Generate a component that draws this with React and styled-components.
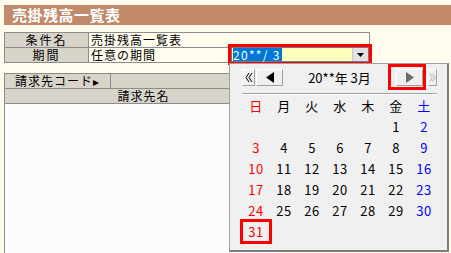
import React from "react";
import styled, { createGlobalStyle } from "styled-components";

const GlobalStyle = createGlobalStyle`
  body {
    margin: 0;
    background: #fffcee;
    font-family: "Noto Sans CJK JP", sans-serif;
  }
`;

const Page = styled.div`
  position: relative;
  width: 451px;
  height: 253px;
  overflow: hidden;
  box-sizing: border-box;
  padding: 5px 0 0 4px;
  background: #fffcee;
  font-size: 12px;
  color: #000;
`;

const TitleBar = styled.div`
  height: 20px;
  line-height: 20px;
  padding-left: 8px;
  background: #c08a6b;
  color: #fff;
  font-weight: bold;
  font-size: 15px;
  letter-spacing: 0.5px;
`;

const CondTable = styled.div`
  display: grid;
  grid-template-columns: 84px 1fr;
  width: 365px;
  margin-top: 7px;
  border-top: 1px solid #8c8c8c;
  border-left: 1px solid #8c8c8c;
`;

const Cell = styled.div`
  height: 14px;
  line-height: 14px;
  border-right: 1px solid #8c8c8c;
  border-bottom: 1px solid #8c8c8c;
  background: ${(p) => (p.$head ? "#d9d4ca" : "transparent")};
  text-align: ${(p) => (p.$center ? "center" : "left")};
  padding-left: ${(p) => (p.$center ? 0 : p.$indent || 2)}px;
  letter-spacing: ${(p) => p.$spacing || 0}px;
  white-space: nowrap;
`;

const ValueRow = styled(Cell)`
  display: flex;
  align-items: flex-start;
  justify-content: space-between;
`;

const Combo = styled.div`
  display: flex;
  width: 136px;
  height: 13px;
  margin-top: -1px;
  border: 1px solid #7a7a7a;
  background: #ffffc0;
  outline: 3px solid #ff0000;
`;

const Selected = styled.div`
  flex: 1;
  padding-left: 1px;
  line-height: 13px;
  span {
    display: inline-block;
    background: #0078d7;
    color: #fff;
    white-space: pre;
    letter-spacing: 1.3px;
    padding-right: 1px;
  }
`;

const DropButton = styled.div`
  width: 15px;
  display: flex;
  align-items: center;
  justify-content: center;
  background: #e1e1e1;
  border-left: 1px solid #c8c8c8;
`;

const ListTable = styled.div`
  width: 278px;
  margin-top: 10px;
  border-top: 1px solid #8c8c8c;
  border-left: 1px solid #8c8c8c;
`;

const HeadRow = styled.div`
  display: grid;
  grid-template-columns: ${(p) => p.$cols};
`;

const ListBody = styled.div`
  height: 160px;
  background: #fcfcfc;
`;

const Popup = styled.div`
  position: absolute;
  left: 229px;
  top: 63px;
  width: 220px;
  height: 189px;
  box-sizing: border-box;
  background: #f0f0f0;
  border-top: 1px solid #a0a0a0;
  border-left: 1px solid #a0a0a0;
  border-right: 2px solid #7c7c7c;
  border-bottom: 2px solid #7c7c7c;
  padding: 5px 10px 0 12px;
`;

const CalHeader = styled.div`
  display: flex;
  align-items: center;
  height: 17px;
`;

const NavButton = styled.div`
  position: relative;
  width: ${(p) => p.$w}px;
  height: 17px;
  margin-left: ${(p) => p.$gap || 0}px;
  box-sizing: border-box;
  display: flex;
  align-items: center;
  justify-content: center;
  background: #f0f0f0;
  border-top: 1px solid #fff;
  border-left: 1px solid #fff;
  border-right: 1px solid #a0a0a0;
  border-bottom: 1px solid #a0a0a0;
  ${(p) =>
    p.$marked &&
    `&::after {
      content: "";
      position: absolute;
      left: -9px;
      right: -4px;
      top: -6px;
      bottom: -5px;
      border: 3px solid #ff0000;
    }`}
`;

const MonthLabel = styled.div`
  flex: 1;
  text-align: center;
  font-size: 13px;
  white-space: pre;
`;

const Separator = styled.div`
  margin-top: 7px;
  height: 0;
  border-top: 1px solid #a0a0a0;
  border-bottom: 1px solid #fff;
`;

const DayGrid = styled.div`
  display: grid;
  grid-template-columns: repeat(7, 28px);
  grid-auto-rows: 21px;
`;

const colColor = (c) => (c === 0 ? "#ff0000" : c === 6 ? "#0000ff" : "#000");

const DayCell = styled.div`
  display: flex;
  align-items: center;
  justify-content: center;
  color: ${(p) => colColor(p.$col)};
  font-size: 13px;
  letter-spacing: 0.5px;
  outline: ${(p) => (p.$marked ? "3px solid #ff0000" : "none")};
  outline-offset: -1px;
`;

const weekdays = ["日", "月", "火", "水", "木", "金", "土"];
const firstCol = 5;

const Chevrons = ({ dir, color }) => (
  <svg width="8" height="11" viewBox="0 0 8 11">
    {dir === "left" ? (
      <path d="M4 1 L1 5.5 L4 10 M7 1 L4 5.5 L7 10" fill="none" stroke={color} strokeWidth="1" />
    ) : (
      <path d="M1 1 L4 5.5 L1 10 M4 1 L7 5.5 L4 10" fill="none" stroke={color} strokeWidth="1" />
    )}
  </svg>
);

const Triangle = ({ dir, color }) => (
  <svg width="10" height="11" viewBox="0 0 10 11">
    {dir === "left" ? (
      <polygon points="9,0 9,11 1,5.5" fill={color} />
    ) : (
      <polygon points="1,0 1,11 9,5.5" fill={color} />
    )}
  </svg>
);

const App = () => {
  const cells = [];
  for (let i = 0; i < firstCol; i++) cells.push(<DayCell key={"e" + i} />);
  for (let d = 1; d <= 31; d++) {
    const col = (firstCol + d - 1) % 7;
    cells.push(
      <DayCell key={d} $col={col} $marked={d === 31}>
        {d}
      </DayCell>
    );
  }

  return (
    <Page>
      <GlobalStyle />
      <TitleBar>売掛残高一覧表</TitleBar>

      <CondTable>
        <Cell $head $center $spacing={2}>条件名</Cell>
        <Cell $spacing={1}>売掛残高一覧表</Cell>
        <Cell $head $center $spacing={2}>期間</Cell>
        <ValueRow $spacing={1}>
          <span>任意の期間</span>
          <Combo>
            <Selected>
              <span>20**/ 3</span>
            </Selected>
            <DropButton>
              <svg width="7" height="4" viewBox="0 0 7 4">
                <polygon points="0,0 7,0 3.5,4" fill="#000" />
              </svg>
            </DropButton>
          </Combo>
        </ValueRow>
      </CondTable>

      <ListTable>
        <HeadRow $cols="106px 1fr">
          <Cell $head $indent={10} $spacing={1}>請求先コード▸</Cell>
          <Cell $head />
        </HeadRow>
        <HeadRow $cols="1fr">
          <Cell $head $center $spacing={1}>請求先名</Cell>
        </HeadRow>
        <ListBody />
      </ListTable>

      <Popup>
        <CalHeader>
          <NavButton $w={13}>
            <Chevrons dir="left" color="#000" />
          </NavButton>
          <NavButton $w={27} $gap={1}>
            <Triangle dir="left" color="#000" />
          </NavButton>
          <MonthLabel>20**年 3月</MonthLabel>
          <NavButton $w={27} $marked>
            <Triangle dir="right" color="#6a6a6a" />
          </NavButton>
          <NavButton $w={9} $gap={5}>
            <Chevrons dir="right" color="#a8a8a8" />
          </NavButton>
        </CalHeader>
        <Separator />
        <DayGrid>
          {weekdays.map((w, i) => (
            <DayCell key={w} $col={i}>
              {w}
            </DayCell>
          ))}
          {cells}
        </DayGrid>
      </Popup>
    </Page>
  );
};

export default App;
